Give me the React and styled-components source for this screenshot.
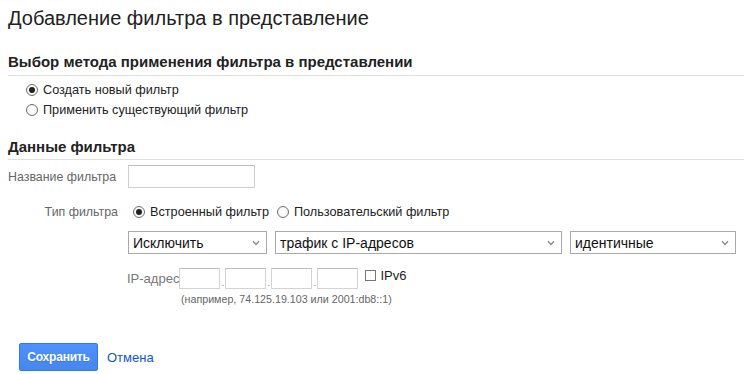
import React from "react";
import styled, { createGlobalStyle } from "styled-components";

const Global = createGlobalStyle`
  html, body { margin: 0; padding: 0; background: #fff; }
  body { font-family: "Liberation Sans", Arial, sans-serif; color: #222; }
  * { box-sizing: border-box; }
`;

const Page = styled.div`
  width: 744px;
  height: 374px;
  padding: 0 0 0 8px;
  overflow: hidden;
`;

const Title = styled.h1`
  margin: 7px 0 0;
  font-size: 20px;
  line-height: 23px;
  font-weight: normal;
  color: #222;
`;

const SectionHeading = styled.h2`
  margin: ${(p) => p.$top}px 0 0;
  padding-bottom: ${(p) => p.$pad}px;
  font-size: 15px;
  line-height: 17px;
  font-weight: bold;
  color: #222;
  border-bottom: 1px solid #e0e0e0;
`;

const RadioList = styled.div`
  display: flex;
  flex-direction: column;
  margin: 4px 0 0 18px;
`;

const RadioRow = styled.label`
  display: flex;
  align-items: center;
  height: 20px;
  font-size: 12.7px;
  color: #222;
  gap: 5px;
  margin-right: ${(p) => p.$mr || 0}px;
`;

const RadioDot = styled.span`
  width: 12px;
  height: 12px;
  border-radius: 50%;
  border: 1px solid #6e6e6e;
  background: radial-gradient(circle, #fff 0%, #f2f2f2 100%);
  display: flex;
  align-items: center;
  justify-content: center;
  flex: none;
  &::after {
    content: "";
    display: ${(p) => (p.$checked ? "block" : "none")};
    width: 6px;
    height: 6px;
    border-radius: 50%;
    background: #222;
  }
`;

const FormGrid = styled.div`
  display: grid;
  grid-template-columns: 110px 1fr;
  column-gap: 10px;
  align-items: center;
`;

const Label = styled.div`
  font-size: 12.4px;
  color: #666;
  text-align: ${(p) => p.$align || "right"};
  white-space: nowrap;
  margin-top: ${(p) => p.$top || 0}px;
`;

const TextInput = styled.div`
  width: 127px;
  height: 23px;
  border: 1px solid #d0d0d0;
  border-top-color: #bdbdbd;
  background: #fff;
`;

const Field = styled.div`
  display: flex;
  align-items: center;
  margin-top: ${(p) => p.$top || 0}px;
  padding-left: ${(p) => p.$indent || 0}px;
`;

const SelectRow = styled.div`
  display: flex;
  gap: 8px;
  margin-top: 9px;
`;

const SelectBox = styled.div`
  width: ${(p) => p.$w}px;
  height: 23px;
  border: 1px solid #a9a9a9;
  background: #fff;
  display: flex;
  align-items: center;
  justify-content: space-between;
  padding: 0 6px 0 4px;
  font-size: 14px;
  color: #111;
`;

const Chevron = () => (
  <svg width="8" height="6" viewBox="0 0 8 6" aria-hidden="true">
    <path d="M1 1.2 L4 4.4 L7 1.2" fill="none" stroke="#8a8a8a" strokeWidth="1.4" />
  </svg>
);

const IpRow = styled.div`
  display: flex;
  align-items: center;
  margin: 14px 0 0 119px;
`;

const IpBox = styled.div`
  width: 41px;
  height: 21px;
  border: 1px solid #d3d3d3;
  border-top-color: #bdbdbd;
  background: #fff;
`;

const IpDot = styled.span`
  width: 5px;
  align-self: flex-end;
  text-align: center;
  font-size: 11px;
  line-height: 14px;
  color: #999;
`;

const CheckBox = styled.span`
  width: 11px;
  height: 11px;
  border: 1px solid #777;
  background: #fff;
  margin: 0 4px 7px 7px;
`;

const IpLabel = styled.span`
  font-size: 13px;
  color: ${(p) => (p.$dark ? "#222" : "#777")};
  margin-bottom: ${(p) => (p.$dark ? 6 : 0)}px;
`;

const Hint = styled.div`
  margin: 3px 0 0 173px;
  font-size: 10.7px;
  line-height: 14px;
  color: #666;
`;

const Actions = styled.div`
  display: flex;
  align-items: center;
  gap: 9px;
  margin: 37px 0 0 11px;
`;

const PrimaryButton = styled.button`
  height: 28px;
  width: 79px;
  padding: 0;
  border: 1px solid #3079ed;
  border-radius: 2px;
  background: linear-gradient(#4d90fe, #4787ed);
  color: #fff;
  font-family: "Liberation Sans", Arial, sans-serif;
  font-size: 12px;
  font-weight: bold;
  letter-spacing: -0.2px;
  text-shadow: 0 1px 1px rgba(0, 0, 0, 0.15);
`;

const CancelLink = styled.a`
  font-size: 13px;
  color: #15c;
  text-decoration: none;
`;

export default function App() {
  return (
    <>
      <Global />
      <Page>
        <Title>Добавление фильтра в представление</Title>

        <SectionHeading $top={23} $pad={5}>
          Выбор метода применения фильтра в представлении
        </SectionHeading>
        <RadioList>
          <RadioRow>
            <RadioDot $checked />
            Создать новый фильтр
          </RadioRow>
          <RadioRow>
            <RadioDot />
            Применить существующий фильтр
          </RadioRow>
        </RadioList>

        <SectionHeading $top={18} $pad={4}>
          Данные фильтра
        </SectionHeading>

        <FormGrid>
          <Label $align="left" $top={5}>Название фильтра</Label>
          <Field $top={5}>
            <TextInput />
          </Field>

          <Label $top={14}>Тип фильтра</Label>
          <Field $top={14} $indent={5}>
            <RadioRow $mr={8}>
              <RadioDot $checked />
              Встроенный фильтр
            </RadioRow>
            <RadioRow>
              <RadioDot />
              Пользовательский фильтр
            </RadioRow>
          </Field>

          <div />
          <SelectRow>
            <SelectBox $w={139}>
              Исключить
              <Chevron />
            </SelectBox>
            <SelectBox $w={287}>
              трафик с IP-адресов
              <Chevron />
            </SelectBox>
            <SelectBox $w={166}>
              идентичные
              <Chevron />
            </SelectBox>
          </SelectRow>
        </FormGrid>

        <IpRow>
          <IpLabel>IP-адрес</IpLabel>
          <IpBox />
          <IpDot>.</IpDot>
          <IpBox />
          <IpDot>.</IpDot>
          <IpBox />
          <IpDot>.</IpDot>
          <IpBox />
          <CheckBox />
          <IpLabel $dark>IPv6</IpLabel>
        </IpRow>
        <Hint>(например, 74.125.19.103 или 2001:db8::1)</Hint>

        <Actions>
          <PrimaryButton>Сохранить</PrimaryButton>
          <CancelLink href="#">Отмена</CancelLink>
        </Actions>
      </Page>
    </>
  );
}
